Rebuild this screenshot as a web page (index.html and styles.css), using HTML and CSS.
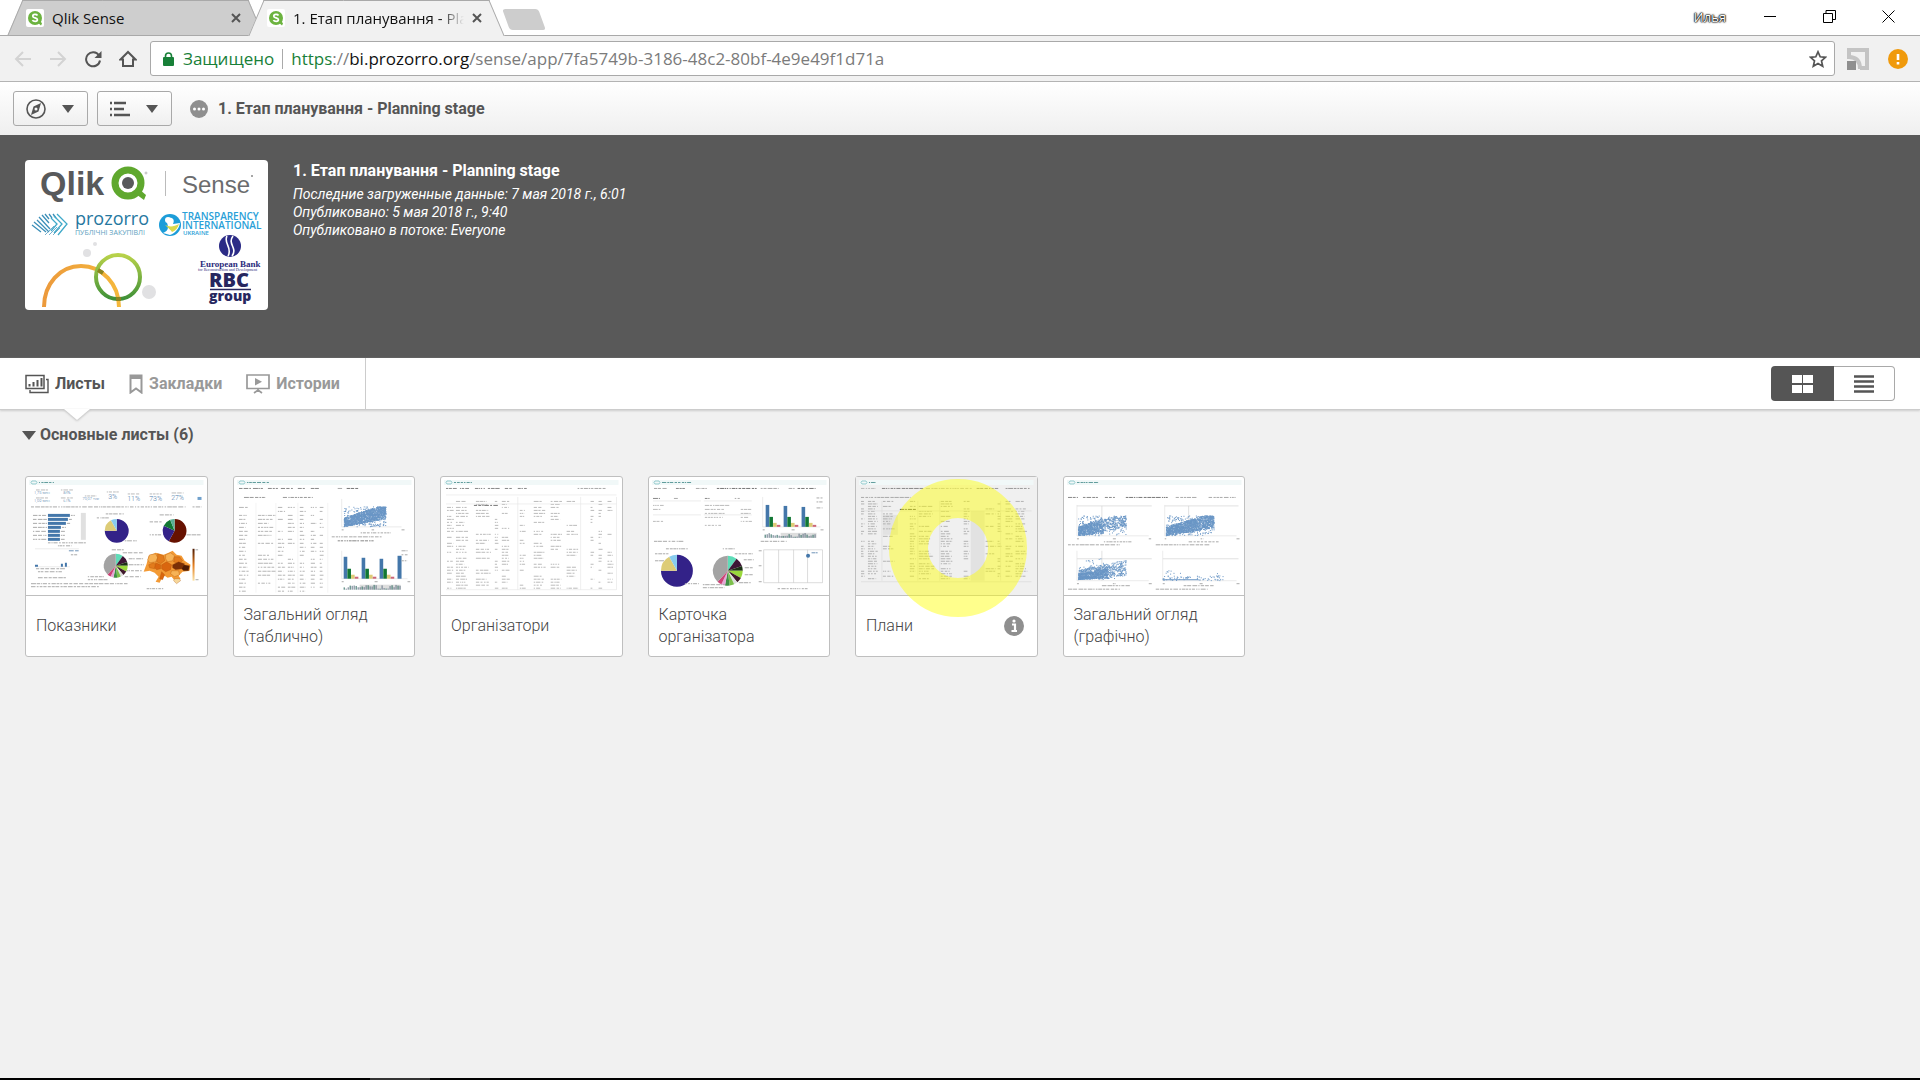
FILE: index.html
```html
<!DOCTYPE html>
<html lang="ru">
<head>
<meta charset="utf-8">
<meta name="viewport" content="width=device-width, initial-scale=1">
<title>1. Етап планування - Planning stage</title>
<link rel="stylesheet" href="styles.css">
</head>
<body>

<!-- browser tabs -->
<div class="tabstrip">
  <div class="tab">
    <svg class="favicon" viewBox="0 0 18 18"><rect width="18" height="18" rx="2" fill="#fff"/><circle cx="9" cy="9" r="7" fill="#6cb33f"/><path d="M11 13l4 3.500 1-2-2-3z" fill="#6cb33f"/><path d="M11.500 6.500C10.500 5 6.800 5 6.800 7.200c0 2 4.600 1.400 4.600 3.500 0 2.200-4 2-5 .4" fill="none" stroke="#fff" stroke-width="1.700"/></svg>
    <span class="tab-name">Qlik Sense</span>
    <button class="tab-close" aria-label="Закрыть"><svg viewBox="0 0 10 10"><path d="M1 1l8 8M9 1l-8 8"/></svg></button>
  </div>
  <div class="tab active">
    <svg class="favicon" viewBox="0 0 18 18"><rect width="18" height="18" rx="2" fill="#fff"/><circle cx="9" cy="9" r="7" fill="#6cb33f"/><path d="M11 13l4 3.500 1-2-2-3z" fill="#6cb33f"/><path d="M11.500 6.500C10.500 5 6.800 5 6.800 7.200c0 2 4.600 1.400 4.600 3.500 0 2.200-4 2-5 .4" fill="none" stroke="#fff" stroke-width="1.700"/></svg>
    <span class="tab-name">1. Етап планування - Planning</span>
    <button class="tab-close" aria-label="Закрыть"><svg viewBox="0 0 10 10"><path d="M1 1l8 8M9 1l-8 8"/></svg></button>
  </div>
  <button class="new-tab" aria-label="Новая вкладка"></button>
  <div class="window-controls">
    <span class="user">Илья</span>
    <button aria-label="Свернуть"><svg viewBox="0 0 13 13"><path d="M0 6.500h12"/></svg></button>
    <button aria-label="Развернуть"><svg viewBox="0 0 13 13"><path d="M.5 3.500h9v9h-9zM3 3.500v-3h9.500v9H10"/></svg></button>
    <button aria-label="Закрыть"><svg viewBox="0 0 13 13"><path d="M.5.5l12 12M12.500.5l-12 12"/></svg></button>
  </div>
</div>

<!-- address bar -->
<div class="addressbar">
  <button class="nav-btn off" aria-label="Назад"><svg viewBox="0 0 18 18"><path d="M17 9H2M9 2L2 9l7 7"/></svg></button>
  <button class="nav-btn off" aria-label="Вперед"><svg viewBox="0 0 18 18"><path d="M1 9h15M9 2l7 7-7 7"/></svg></button>
  <button class="nav-btn" aria-label="Обновить"><svg viewBox="0 0 18 18"><path d="M15 5.500A7 7 0 1 0 16 10.500"/><path d="M17.500 1v7h-7z" fill="#555" stroke="none"/></svg></button>
  <button class="nav-btn" aria-label="Домой"><svg viewBox="0 0 18 18"><path d="M1.500 9.500L9 2l7.500 7.500H14V16H4V9.500z"/></svg></button>
  <div class="omnibox">
    <svg class="lock" viewBox="0 0 11 14"><rect y="5" width="11" height="9" rx="1" fill="#188038"/><path d="M2.500 6V4a3 3 0 0 1 6 0v2" fill="none" stroke="#188038" stroke-width="1.600"/></svg>
    <span class="secure">Защищено</span>
    <span class="url"><span class="scheme">https</span>://<span class="host">bi.prozorro.org</span>/sense/app/7fa5749b-3186-48c2-80bf-4e9e49f1d71a</span>
    <button class="star" aria-label="Добавить закладку"><svg viewBox="0 0 18 18"><path d="M9 1.800l2.200 5 5.300.5-4 3.600 1.200 5.300L9 13.400l-4.700 2.800 1.200-5.300-4-3.600 5.300-.5z" fill="none" stroke="#555" stroke-width="1.700"/></svg></button>
  </div>
  <button class="ext" aria-label="Расширение"><svg viewBox="0 0 22 22"><path d="M2 11V2h18v18h-7" fill="none" stroke="#c4c4c4" stroke-width="4"/><path d="M2 9c7 0 11 4 11 12" fill="none" stroke="#c4c4c4" stroke-width="4"/><rect y="13" width="9" height="9" fill="#8f8f8f"/></svg></button>
  <button class="ext" aria-label="Меню"><svg viewBox="0 0 22 22"><circle cx="11" cy="11" r="10" fill="#f09a0c"/><path d="M11 6v6M11 14v2.500" stroke="#fff" stroke-width="2.600"/></svg></button>
</div>

<!-- Qlik toolbar -->
<div class="app-toolbar">
  <button class="menu-btn" aria-label="Навигация">
    <svg viewBox="0 0 22 22"><circle cx="11" cy="11" r="9" fill="none" stroke="#555" stroke-width="1.600"/><path fill-rule="evenodd" d="M16 5l-2.500 8.500L6 17l2.500-8.500zM11 9.500a1.500 1.500 0 1 0 0 3 1.500 1.500 0 0 0 0-3z" fill="#555"/></svg>
    <span class="caret"></span>
  </button>
  <button class="menu-btn" aria-label="Меню приложения">
    <svg viewBox="0 0 22 22"><path d="M1 5h2M1 11h2M1 17h2M5 5h12M5 11h10M5 17h16" stroke="#555" stroke-width="2.600"/></svg>
    <span class="caret"></span>
  </button>
  <svg class="dots" viewBox="0 0 18 18"><circle cx="9" cy="9" r="9" fill="#8f8f8f"/><g fill="#fff"><circle cx="4.500" cy="9" r="1.500"/><circle cx="9" cy="9" r="1.500"/><circle cx="13.500" cy="9" r="1.500"/></g></svg>
  <span class="app-name">1. Етап планування - Planning stage</span>
</div>

<!-- app info -->
<div class="app-header">
  <svg class="app-logo" viewBox="0 0 243 150">
    <defs>
      <linearGradient id="ring" x1="0" y1="0" x2="0" y2="1"><stop offset="0" stop-color="#b8d24a"/><stop offset="1" stop-color="#3f9138"/></linearGradient>
      <linearGradient id="arc" x1="0" y1="0" x2="1" y2="0"><stop offset="0" stop-color="#ec9a3c"/><stop offset="1" stop-color="#f5b83c"/></linearGradient>
    </defs>
    <text class="l-qlik" x="15" y="35">Qlik</text>
    <circle cx="103" cy="23" r="13" fill="none" stroke="#5fa82e" stroke-width="7"/>
    <path d="M108 32l11 8 2-5-7-6z" fill="#5fa82e"/>
    <circle cx="103" cy="23" r="6" fill="#58595b"/>
    <circle cx="121" cy="13" r="1" fill="none" stroke="#999" stroke-width=".6"/>
    <path d="M140.500 11v25" stroke="#bbb"/>
    <text class="l-sense" x="157" y="33">Sense</text>
    <circle cx="227" cy="16" r="1" fill="#888"/>
    <g fill="none" stroke="#3c8fb8">
      <path d="M7 65l9 7M9 62l12 10M12 60l12 12M14 57l11 12M17 55l7 8M20 54l4 5M24 54l3 4M28 54l3 4" stroke-width="1.300"/>
      <path d="M32 54l10 10-9 11M29 56l8 8-8 9M26 58l6 6-6 7" stroke="#3fa9c9" stroke-width="1.300"/>
      <path d="M20 75l9-9M24 75l8-8M28 75l7-7" stroke-width="1" opacity=".7"/>
    </g>
    <text class="l-proz" x="50" y="65">prozorro</text>
    <text class="l-pub" x="50" y="75">ПУБЛІЧНІ ЗАКУПІВЛІ</text>
    <circle cx="145" cy="65" r="11" fill="#1c9dd9"/>
    <path d="M143 58c5-1 7 2 5 6l7-1c-1 6-5 10-10 12l-7-2c6-2 6-7 3-12z" fill="#fff"/>
    <path d="M140 65c4 2 9 2 14-1-1 4-4 7-7 8-1-2-4-4-7-7z" fill="#d9d94c"/>
    <circle cx="143" cy="60" r="3" fill="#fff"/>
    <text class="l-ti" x="157" y="60">TRANSPARENCY</text>
    <text class="l-ti" x="157" y="69">INTERNATIONAL</text>
    <text class="l-ua" x="158" y="75">UKRAINE</text>
    <circle cx="205" cy="86" r="11" fill="#2b2b86"/>
    <path d="M202 76c-4 7 6 12 1 20M208 76c-6 8 5 12-1 20" fill="none" stroke="#fff" stroke-width="1.600"/>
    <text class="l-eb" x="175" y="107">European Bank</text>
    <text class="l-rec" x="173" y="111">for Reconstruction and Development</text>
    <text class="l-rbc" x="184" y="127">RBC</text>
    <path d="M185 129.500h41" stroke="#27275f" stroke-width="1.500"/>
    <text class="l-grp" x="184" y="141">group</text>
    <path d="M19 147c0-23 16-41 37-41s38 18 38 41" fill="none" stroke="url(#arc)" stroke-width="4"/>
    <circle cx="93" cy="117" r="22" fill="none" stroke="url(#ring)" stroke-width="4"/>
    <path d="M73 110l5 3M91 139h5" stroke="#8a8420" stroke-width="4"/>
    <g fill="#e1e1e3"><circle cx="62" cy="93" r="4"/><circle cx="70" cy="84" r="2"/><circle cx="124" cy="132" r="7"/></g>
  </svg>
  <div class="app-info">
    <h1>1. Етап планування - Planning stage</h1>
    <p>Последние загруженные данные: 7 мая 2018 г., 6:01</p>
    <p>Опубликовано: 5 мая 2018 г., 9:40</p>
    <p>Опубликовано в потоке: Everyone</p>
  </div>
</div>

<!-- sheets / bookmarks / stories -->
<div class="content-bar">
  <div class="content-tabs">
    <button class="content-tab selected">
      <svg viewBox="0 0 24 20" fill="none" stroke="#555"><path d="M1 1.500h18v13H1z" stroke-width="1.500"/><path d="M21 5.500h2v13H5V16" stroke-width="1.400"/><path d="M4.500 12.500V10M8.500 12.500V8M12.500 12.500V6M16.500 12.500V4" stroke-width="2"/></svg>
      Листы
    </button>
    <button class="content-tab">
      <svg class="narrow" viewBox="0 0 14 20"><path d="M1.500 1.500h11v17L7 14.500l-5.500 4z" fill="none" stroke="#999" stroke-width="2"/><path d="M1 1h12v4H1z" fill="#999"/></svg>
      Закладки
    </button>
    <button class="content-tab">
      <svg viewBox="0 0 24 20"><path d="M1 1h22v13.500H1zM12 14.500V18M8 19l4-3 4 3" fill="none" stroke="#999" stroke-width="1.700"/><path d="M9 4l7 3.800-7 3.800z" fill="#999"/></svg>
      Истории
    </button>
  </div>
  <div class="view-toggle">
    <button class="on" aria-label="Сетка"><svg viewBox="0 0 22 18"><path d="M0 0h10v8H0zM11 0h10v8H11zM0 10h10v8H0zM11 10h10v8H11z" fill="#fff"/></svg></button>
    <button aria-label="Список"><svg viewBox="0 0 22 18"><path d="M1 1.500h20M1 6.500h20M1 11.500h20M1 16.500h20" stroke="#555" stroke-width="2.400"/></svg></button>
  </div>
</div>

<main>
  <h2><span class="caret"></span>Основные листы (6)</h2>
  <div class="sheets">
    <a class="sheet" href="#"><svg class="thumb" id="thumb1" viewBox="0 0 181 118"></svg><span class="name">Показники</span></a>
    <a class="sheet" href="#"><svg class="thumb" id="thumb2" viewBox="0 0 181 118"></svg><span class="name">Загальний огляд (таблично)</span></a>
    <a class="sheet" href="#"><svg class="thumb" id="thumb3" viewBox="0 0 181 118"></svg><span class="name">Організатори</span></a>
    <a class="sheet" href="#"><svg class="thumb" id="thumb4" viewBox="0 0 181 118"></svg><span class="name">Карточка організатора</span></a>
    <a class="sheet hovered" href="#"><svg class="thumb" id="thumb5" viewBox="0 0 181 118"></svg><span class="name">Плани
      <svg class="info" viewBox="0 0 20 20"><circle cx="10" cy="10" r="10" fill="#8f8f8f"/><path d="M8 8.500h3V15M7.500 15h5.500" fill="none" stroke="#fff" stroke-width="2.200"/><circle cx="10" cy="5" r="1.600" fill="#fff"/></svg></span>
      <span class="pointer-ring"></span></a>
    <a class="sheet" href="#"><svg class="thumb" id="thumb6" viewBox="0 0 181 118"></svg><span class="name">Загальний огляд (графічно)</span></a>
  </div>
</main>

<footer class="taskbar"><span></span></footer>

<script src="script.js"></script>
</body>
</html>
```
FILE: styles.css
```css
* {
  box-sizing: border-box;
}

body {
  margin: 0;
  min-height: 100vh;
  display: flex;
  flex-direction: column;
  background: #f1f1f1;
  color: #555;
  font-family: Roboto, "Noto Sans", sans-serif;
  font-size: 16px;
}

button {
  display: flex;
  align-items: center;
  justify-content: center;
  margin: 0;
  padding: 0;
  border: none;
  background: none;
  color: inherit;
  font: inherit;
  cursor: pointer;
}

h1, h2, p {
  margin: 0;
}

svg {
  display: block;
  flex: none;
}

/* browser tabs */
.tabstrip {
  display: flex;
  height: 36px;
  padding-left: 15px;
  background: #fff;
  border-bottom: 1px solid #a9a9a9;
  font-family: "Open Sans", sans-serif;
  font-size: 15px;
  color: #111;
}

.tab {
  position: relative;
  z-index: 1;
  display: flex;
  align-items: center;
  width: 241px;
  height: 35px;
  padding: 0 15px 0 11px;
}

.tab::before, .tab::after {
  content: '';
  position: absolute;
  z-index: -1;
  top: 0;
  bottom: 0;
  width: 60%;
  background: #cecece;
  border-top: 1px solid #a9a9a9;
}

.tab::before {
  left: 0;
  border-left: 1px solid #a9a9a9;
  transform: skewX(-23deg);
}

.tab::after {
  right: 0;
  border-right: 1px solid #a9a9a9;
  transform: skewX(23deg);
}

.tab.active {
  z-index: 2;
  height: 36px;
}

.tab.active::before, .tab.active::after {
  background: #f1f1f1;
}

.favicon {
  width: 18px;
  height: 18px;
  margin-right: 8px;
}

.tab-name {
  flex: 1;
  overflow: hidden;
  white-space: nowrap;
}

.active .tab-name {
  -webkit-mask-image: linear-gradient(to right, #000 86%, transparent);
  mask-image: linear-gradient(to right, #000 86%, transparent);
}

.tab-close {
  margin-left: 8px;
}

.tab-close svg {
  width: 10px;
  height: 10px;
  stroke: #555;
  stroke-width: 2;
}

.new-tab {
  width: 36px;
  height: 21px;
  margin: 9px 0 0 9px;
  background: #cdcdcd;
  border-radius: 3px;
  transform: skewX(20deg);
}

.window-controls {
  display: flex;
  align-items: center;
  gap: 46px;
  height: 33px;
  margin-left: auto;
  padding-right: 25px;
}

.window-controls svg {
  width: 13px;
  height: 13px;
  fill: none;
  stroke: #000;
}

.user {
  margin-right: -8px;
  font-size: 13px;
  color: #fff;
  text-shadow: 0 0 1px #000, 0 0 1px #000, 0 0 2px #000, 0 0 2px #000;
}

/* address bar */
.addressbar {
  display: flex;
  align-items: center;
  height: 46px;
  padding: 0 10px 0 14px;
  background: #f1f1f1;
  border-bottom: 1px solid #b3b3b3;
}

.nav-btn {
  width: 18px;
  margin-right: 17px;
}

.nav-btn svg, .star svg {
  width: 18px;
  height: 18px;
}

.nav-btn svg {
  fill: none;
  stroke: #555;
  stroke-width: 2;
}

.nav-btn.off svg {
  stroke: #d3d3d3;
}

.omnibox {
  flex: 1;
  display: flex;
  align-items: center;
  height: 35px;
  margin-right: 12px;
  margin-left: -4px;
  padding: 0 7px 0 12px;
  background: #fff;
  border: 1px solid #a9a9a9;
  border-radius: 3px;
  font-family: "Open Sans", sans-serif;
  font-size: 17px;
}

.lock {
  width: 11px;
  height: 14px;
}

.secure {
  margin-left: 9px;
  padding-right: 8px;
  border-right: 1px solid #aaa;
  line-height: 20px;
  color: #188038;
}

.url {
  flex: 1;
  margin-left: 8px;
  color: #7b7b7b;
}

.scheme {
  color: #188038;
}

.host {
  color: #111;
}

.ext {
  margin-right: 1px;
}

.ext + .ext {
  margin-left: 17px;
}

.ext svg {
  width: 22px;
  height: 22px;
}

/* Qlik toolbar */
.app-toolbar {
  display: flex;
  align-items: center;
  height: 53px;
  padding-left: 13px;
  background: linear-gradient(#fff, #efefef);
}

.menu-btn {
  justify-content: space-between;
  width: 75px;
  height: 35px;
  margin-right: 9px;
  padding: 0 13px 0 11px;
  border: 1px solid #a9a9a9;
  border-radius: 3px;
  background: linear-gradient(#fff, #efefef);
}

.menu-btn svg {
  width: 22px;
  height: 22px;
}

.caret {
  display: inline-block;
  border: 6px solid transparent;
  border-top: 8px solid #555;
  border-bottom: none;
}

.dots {
  width: 18px;
  height: 18px;
  margin: 0 10px 0 9px;
}

.app-name {
  font-weight: bold;
}

/* app info */
.app-header {
  display: flex;
  align-items: flex-start;
  gap: 25px;
  min-height: 223px;
  padding: 25px;
  background: #595959;
  color: #fff;
}

.app-logo {
  width: 243px;
  height: 150px;
  background: #fff;
  border-radius: 4px;
}

.app-logo text {
  font-family: "Open Sans", sans-serif;
}

.app-logo .l-qlik {
  font: bold 34px "Liberation Sans", sans-serif;
  fill: #58595b;
}

.app-logo .l-sense {
  font: 24px "Liberation Sans", sans-serif;
  fill: #6b6c6e;
}

.l-proz {
  font-size: 18px;
  fill: #25789f;
}

.l-pub {
  font-size: 7px;
  fill: #5c9fc0;
}

.l-ti {
  font-size: 10px;
  font-weight: 600;
  fill: #2a9fd8;
}

.l-ua {
  font-size: 6px;
  font-weight: 600;
  fill: #2a9fd8;
}

.app-logo .l-eb {
  font: bold 9px "Liberation Serif", serif;
  fill: #2b2b7c;
}

.app-logo .l-rec {
  font: 4px "Liberation Serif", serif;
  fill: #2b2b7c;
}

.l-rbc, .l-grp {
  font-weight: 800;
  fill: #27275f;
}

.l-rbc {
  font-size: 20px;
}

.l-grp {
  font-size: 14px;
}

.app-info h1 {
  margin-bottom: 4px;
  font-size: 16px;
  line-height: 21px;
}

.app-info p {
  font-size: 14px;
  font-style: italic;
  line-height: 18px;
}

/* sheets / bookmarks / stories */
.content-bar {
  display: flex;
  justify-content: space-between;
  align-items: center;
  height: 52px;
  padding-right: 25px;
  background: #fff;
  border-bottom: 1px solid #ccc;
  box-shadow: 0 1px 2px #ccc;
}

.content-tabs {
  display: flex;
  gap: 24px;
  height: 100%;
  padding: 0 25px;
  border-right: 1px solid #ccc;
}

.content-tab {
  position: relative;
  gap: 6px;
  font-weight: bold;
  color: #999;
}

.content-tab svg {
  width: 24px;
  height: 20px;
}

.content-tab svg.narrow {
  width: 14px;
}

.content-tab.selected {
  color: #555;
}

.content-tab.selected::after {
  content: '';
  position: absolute;
  top: 100%;
  left: 39px;
  border: 13px solid transparent;
  border-top: 11px solid #fff;
  border-bottom: none;
  filter: drop-shadow(0 1px 1px #bbb);
}

.view-toggle {
  display: flex;
}

.view-toggle button {
  width: 61px;
  height: 35px;
  border: 1px solid #a9a9a9;
  border-left: none;
  border-radius: 0 4px 4px 0;
}

.view-toggle .on {
  width: 63px;
  border: none;
  border-radius: 4px 0 0 4px;
  background: #555;
}

.view-toggle svg {
  width: 22px;
  height: 18px;
}

main {
  flex: 1;
  padding: 13px 25px 25px;
}

h2 {
  display: flex;
  align-items: center;
  gap: 4px;
  margin: 0 0 29px -3px;
  font-size: 16px;
  line-height: 24px;
}

h2 .caret {
  border-width: 9px 7px 0;
}

.sheets {
  display: grid;
  grid-template-columns: repeat(6, 1fr);
  gap: 25px;
  max-width: 1220px;
}

.sheet {
  position: relative;
  background: #fff;
  border: 1px solid #bfbfbf;
  border-radius: 3px;
  color: #444;
  font-weight: 300;
  text-decoration: none;
}

.thumb {
  width: 100%;
  border-bottom: 1px solid #bfbfbf;
}

.hovered .thumb {
  background: #f0f0f0;
}

.name {
  display: flex;
  align-items: center;
  justify-content: space-between;
  min-height: 60px;
  padding: 1px 13px 0 10px;
  line-height: 22px;
}

.info {
  width: 20px;
  height: 20px;
}

/* mouse highlight */
.pointer-ring {
  position: absolute;
  left: 33px;
  top: 2px;
  width: 138px;
  height: 138px;
  border: 39px solid rgba(255, 255, 0, 0.45);
  border-radius: 50%;
}

.taskbar {
  display: flex;
  height: 2px;
  padding-left: 370px;
  background: #000;
}

.taskbar span {
  width: 60px;
  background: #333;
}
```
FILE: script.js
```js
// draws the little sheet previews

var seed = 7;
function rnd() {
  seed = (seed * 16807) % 2147483647;
  return seed / 2147483647;
}

function rect(x, y, w, h, color) {
  return '<rect x="' + x + '" y="' + y + '" width="' + w + '" height="' + h + '" fill="' + color + '"/>';
}

// a line of unreadable text
function words(x, y, w, color) {
  var d = '';
  var end = x + w;
  while (x < end) {
    var len = Math.min(1 + rnd() * 4, end - x);
    d += 'M' + x.toFixed(1) + ' ' + y + 'h' + len.toFixed(1);
    x += len + 0.5 + rnd();
  }
  return '<path d="' + d + '" stroke="' + (color || '#aaa') + '"/>';
}

function header(w) {
  return rect(3, 3, 175, 5, '#f1f8f8') +
    '<path d="M6 4l-1 1.500 1 1.500h4l1-1.500-1-1.500z" fill="none" stroke="#7fc0c4" stroke-width=".8"/>' +
    words(13, 5.5, w, '#5f9c9c');
}

function pie(cx, cy, r, parts) {
  var a = 0, s = '';
  for (var i = 0; i < parts.length; i++) {
    var b = a + parts[i][0] * Math.PI * 2;
    s += '<path d="M' + cx + ' ' + cy +
      'L' + (cx + r * Math.sin(a)).toFixed(2) + ' ' + (cy - r * Math.cos(a)).toFixed(2) +
      'A' + r + ' ' + r + ' 0 ' + (b - a > Math.PI ? 1 : 0) + ' 1 ' +
      (cx + r * Math.sin(b)).toFixed(2) + ' ' + (cy - r * Math.cos(b)).toFixed(2) +
      'z" fill="' + parts[i][1] + '"/>';
    a = b;
  }
  return s;
}

// cols: [x, width, skip chance], gap between rows
function table(cols, top, bottom, gap, color) {
  var s = '';
  for (var y = top; y < bottom; y += gap) {
    for (var i = 0; i < cols.length; i++) {
      if (rnd() > cols[i][2]) {
        s += words(cols[i][0], y, cols[i][1] * (0.6 + rnd() * 0.4), color);
      }
    }
  }
  return s;
}

function bars(x, y, step, count) {
  var h = [22, 10, 4, 2];
  var c = ['#4477aa', '#117733', '#ddcc77', '#cc6677'];
  var s = '';
  for (var i = 0; i < count; i++) {
    for (var j = 0; j < 4; j++) {
      s += rect(x + i * step + j * 3.7, y - h[j] + i * (j ? 0 : 1), 3.6, h[j] - i * (j ? 0 : 1), c[j]);
    }
  }
  return s;
}

function miniBars(x, y, w) {
  var s = rect(x + 16, y - 5, w - 16, 5, '#ddd');
  for (var i = 0; i < w; i += 2) {
    var h = 1 + rnd() * 4;
    s += rect(x + i, y - h, 1, h, i % 3 ? '#667788' : '#2f6b62');
  }
  return s;
}

// thick cloud that rises to the right, thinner above
function scatter(x, y, w, h, n, slope, base) {
  var d = '';
  for (var i = 0; i < n; i++) {
    var px = rnd();
    var py = (base || 0) * px + rnd() * (0.45 + px * slope);
    if (rnd() < 0.15) py = rnd();
    if (py > 1) py = 1 - rnd() * 0.4;
    d += 'M' + (x + px * w).toFixed(1) + ' ' + (y + h - py * h).toFixed(1) + 'h1';
  }
  return '<path d="' + d + '" stroke="#6a97c6"/>';
}

function axes(x, y, w, h) {
  return '<path d="M' + x + ' ' + y + 'v' + h + 'h' + w + '" fill="none" stroke="#ddd" stroke-width=".6"/>' +
    words(x, y + h + 3, 2) + words(x + w / 2, y + h + 3, 3) + words(x + w, y + h + 3, 3);
}

var threeParts = [[0.75, '#332288'], [0.17, '#ddcc77'], [0.08, '#88ccee']];
var manyParts = [[0.1, '#5fdcb8'], [0.1, '#3d1535'], [0.05, '#1c3016'], [0.08, '#9ad83c'], [0.06, '#401a2c'],
  [0.04, '#ddd'], [0.05, '#7cbf4b'], [0.05, '#3f8f46'], [0.04, '#e5a6d6'], [0.05, '#cc4477'], [0.38, '#a3a3a3']];

function draw(id, html) {
  document.getElementById(id).innerHTML = html;
}

function kpi(x, y, text, size) {
  return words(x - 6, y - size, 12, '#bbb') +
    '<text x="' + x + '" y="' + y + '" font-size="' + size + '" text-anchor="middle" fill="#4f7dab">' + text + '</text>';
}

// 1: indicators
var s = header(15);
s += kpi(16, 17, '1,75 млн', 4) + kpi(16, 25, '1,09 млн', 4) + kpi(41, 17, '84%', 4) + kpi(41, 25, '61%', 4) +
  kpi(65, 23, '70,07 тис', 4) + kpi(87, 22, '3%', 7) + kpi(108, 24, '11%', 7) + kpi(130, 24, '73%', 7) + kpi(152, 23, '27%', 7);
s += rect(172, 20, 4, 3, '#6fa0cc') + words(5, 30, 155) + words(167, 30, 9);
var barW = [22, 20, 18, 13, 12, 12, 12];
for (var i = 0; i < barW.length; i++) {
  s += rect(22, 37 + i * 4, barW[i], 3, '#4477aa') + words(7, 38.5 + i * 4, 14) + words(23 + barW[i], 38.5 + i * 4, 4);
}
s += rect(55, 36, 5, 27, '#e0e0e0') + words(22, 66, 38) + words(32, 69, 14);
s += '<path d="M9 72h44M9 90h35" stroke="#ddd" stroke-width=".6"/>' + rect(9, 88, 3, 2, '#4477aa') + rect(35, 87, 2, 3, '#4477aa') + rect(39, 86, 2, 4, '#4477aa') +
  words(43, 74, 10, '#6f94b8') + words(45, 78, 7) + words(10, 92, 30) + words(12, 95, 24) + words(12, 101, 28);
s += pie(91, 54, 12, threeParts) + words(80, 37, 18) + words(71, 41, 12) + words(99, 64, 12);
s += pie(149, 54, 12, [[0.58, '#661100'], [0.24, '#332288'], [0.12, '#117733'], [0.06, '#5aae94']]) + words(134, 38, 14) + words(124, 45, 12) + words(124, 58, 12) + words(161, 58, 14);
s += pie(90, 89, 12, manyParts) + words(86, 73, 12) + words(97, 76, 20) + words(103, 82, 15) + words(103, 88, 15) + words(101, 94, 15) + words(99, 100, 16) + words(62, 100, 16) + words(62, 103, 20);
// map
s += '<path d="M121 87l2-8 7-3 8 2 5-2 4-2 4 4 5 1 3 5 6 4-1 6-7 1-4 4 2 3-5 3-4-5-4 1-3-2-3 3-2 4-4-1 3-5-4-4-5-2-6 1z" fill="#f39a35"/>' +
  '<g stroke="#a34a08" stroke-width=".3">' +
  '<path d="M124 78l6-1 2 4-2 4-6 1-2-3z" fill="#f7b357"/><path d="M132 77l6 2 1 5-4 3-4-2 1-4z" fill="#e27b1c"/>' +
  '<path d="M123 88l5-2 3 3-2 3-5-1z" fill="#e27b1c"/><path d="M130 86l5 2 0 4-4 1-2-2z" fill="#d9660f"/>' +
  '<path d="M140 78l5-2 4 3-2 5-5 1-2-3z" fill="#f7b357"/><path d="M136 88l5-3 5 3-1 5-5 2-4-3z" fill="#d9660f"/>' +
  '<path d="M136 95l3 3-2 5-3-1z" fill="#d9660f"/><path d="M149 80l5 0 3 4-4 3-5-2z" fill="#e27b1c"/>' +
  '<path d="M147 88l6-3 6 2-2 5-7 1-3-2z" fill="#7a2f06"/><path d="M158 88l6 1-1 5-5 0-2-2z" fill="#4d1b04"/>' +
  '<path d="M146 94l7 0 1 4-5 2-4-3z" fill="#f7b357"/>' +
  '<path d="M149 102l5 0 1 2-4 3-3-3z" fill="#f7d79a"/></g>';
s += '<defs><linearGradient id="scale" x1="0" y1="0" x2="0" y2="1"><stop offset="0" stop-color="#4d1b04"/><stop offset=".5" stop-color="#e27b1c"/><stop offset="1" stop-color="#fbe3a8"/></linearGradient></defs>' +
  rect(167, 72, 2, 32, 'url(#scale)') + words(170, 73, 3) + words(170, 103, 3);
s += words(5, 107, 98) + words(5, 110, 68) + words(121, 112, 18);
draw('thumb1', s);

// 2: overview table
s = header(22) + words(5, 11.5, 12, '#888') + words(19, 11.5, 10, '#888') + words(34, 11.5, 10, '#888') + words(47, 11.5, 12, '#888') + words(64, 11.5, 7, '#888') + words(77, 11.5, 9, '#888');
s += words(104, 11.5, 5) + words(113, 11.5, 12, '#777') + words(10, 20.5, 22, '#999') + words(49, 20.5, 30, '#999');
s += table([[5, 10, 0.1], [24, 18, 0.2], [44, 8, 0.2], [54, 8, 0.2], [66, 6, 0.2], [77, 6, 0.2], [86, 4, 0.2]], 30.5, 115, 4, '#b5b5b5');
s += '<path d="M22 26v90M42 26v90M64 26v90M94 26v90" stroke="#eee" stroke-width=".6"/>';
s += axes(108, 22, 60, 28) + scatter(110, 30, 42, 20, 1500, 0.3, 0.4) + words(127, 56, 30) + words(98, 60, 50) + words(104, 64, 36, '#888');
s += axes(108, 74, 66, 28) + bars(110, 102, 18, 3) + rect(164, 79, 4, 23, '#4477aa') + miniBars(110, 113, 57) + words(168, 74, 6) + words(168, 78, 6) + words(168, 84, 6);
draw('thumb2', s);

// 3: organizers
s = header(18) + words(5, 11.5, 12, '#888') + words(19, 11.5, 10, '#888') + words(34, 11.5, 10, '#888') + words(47, 11.5, 12, '#888') + words(64, 11.5, 7, '#888') + words(77, 11.5, 9, '#888') + words(137, 11.5, 28);
s += table([[6, 7, 0.4], [15, 13, 0.2], [35, 16, 0.5], [54, 4, 0.5], [61, 8, 0.5], [79, 6, 0.5], [93, 12, 0.3], [110, 12, 0.5], [126, 12, 0.5], [150, 4, 0.5], [158, 4, 0.5], [167, 6, 0.5]], 24.5, 114, 3, '#bbb');
s += '<path d="M5 18h171M5 27h171M5 113h171M77 20v93M140 20v93M176 20v93" stroke="#e4e4e4" stroke-width=".6"/>' + words(33, 28.5, 24, '#777');
draw('thumb3', s);

// 4: organizer card
s = header(30) + words(5, 11.5, 14) + words(27, 11.5, 9, '#888') + words(47, 11.5, 12) + words(68, 11.5, 40, '#777') + words(112, 11.5, 18) + words(140, 11.5, 6) + words(149, 11.5, 18, '#777');
s += words(4, 21.5, 7, '#888') + words(25, 21.5, 5) + words(56, 21.5, 6, '#888') + words(86, 21.5, 5);
s += table([[4, 12, 0.2], [56, 26, 0.1], [92, 12, 0.3]], 28.5, 50, 4, '#bbb') + '<path d="M4 24h48M55 24h48M4 38h48M55 38h48" stroke="#ddd" stroke-width=".6"/>';
s += axes(114, 20, 58, 30) + bars(117, 50, 18, 3) + miniBars(116, 61, 52) + words(168, 21, 6) + words(168, 25, 6) + words(168, 31, 6);
s += words(5, 64.5, 30) + words(112, 64.5, 26);
s += pie(28, 94, 16, threeParts) + words(17, 72, 22) + words(6, 77, 14) + words(6, 84, 10) + words(36, 107, 14);
s += pie(79, 94, 15, manyParts) + words(74, 72, 12) + words(86, 77, 18) + words(95, 83, 10) + words(96, 91, 8) + words(96, 98, 8) + words(90, 106, 12) + words(54, 108, 22) + words(54, 111, 22);
s += '<path d="M115 73h59v33h-59zM130 73v33M145 73v33M159 73v33" fill="none" stroke="#c4c4c4" stroke-width=".6"/>' +
  '<circle cx="159.500" cy="79" r="2" fill="#4477aa"/>' + words(163, 76, 7, '#6f94b8') + words(129, 112, 30) + words(110, 74, 3) + words(110, 89, 3) + words(110, 105, 3);
draw('thumb4', s);

// 5: plans
s = header(7) + words(5, 11.5, 15, '#bbb') + words(26, 11.5, 42, '#888') + words(70, 11.5, 46, '#bbb') + words(121, 11.5, 22, '#999') + words(150, 11.5, 24, '#999') + words(5, 20.5, 50, '#aaa');
s += rect(27, 38, 15, 20, '#e2e2e2') + rect(115, 34, 14, 70, '#e2e2e2');
s += table([[5, 4, 0.4], [12, 10, 0.1], [27, 12, 0.5], [54, 6, 0.4], [63, 16, 0.3], [85, 12, 0.2], [108, 6, 0.4], [130, 12, 0.8], [142, 4, 0.5], [150, 8, 0.4], [160, 12, 0.2]], 24.5, 104, 2.5, '#b3b3b3');
s += words(44, 32.5, 16, '#555') + '<path d="M5 105h171M5 34h171M26 24v80M62 24v80M84 24v80M145 24v80" stroke="#d6d6d6" stroke-width=".6"/>';
draw('thumb5', s);

// 6: overview charts
s = header(22) + words(4, 20.5, 10, '#888') + words(19, 20.5, 15, '#888') + words(41, 20.5, 10, '#888') + words(62, 20.5, 42, '#777') + words(112, 20.5, 22) + words(145, 20.5, 28);
s += '<path d="M13 29h75M38 29v30M101 29h74M125 29v30M13 82h75M38 74v30M99 82h76" stroke="#ccc" stroke-width=".6"/>';
s += axes(13, 28, 72, 31) + scatter(14, 39, 25, 20, 450, 0.35, 0.1) + scatter(14, 39, 48, 20, 650, 0.3, 0.4) + words(40, 65, 28) + words(4, 68, 52);
s += axes(101, 28, 72, 31) + scatter(102, 39, 48, 20, 1600, 0.3, 0.4) + words(125, 65, 30) + words(92, 68, 54);
s += axes(13, 74, 72, 30) + scatter(14, 90, 30, 13, 550, 0.3, 0.1) + scatter(14, 82, 48, 21, 550, 0.3, 0.2) + words(38, 109, 28) + words(4, 112.5, 52);
s += axes(99, 74, 74, 30) + scatter(99, 96, 60, 8, 70, 0.2) + scatter(100, 84, 12, 18, 10, 0.2) + '<path d="M99 103h36" stroke="#6f9bc8"/>' + words(120, 109, 30) + words(92, 112.5, 52);
draw('thumb6', s);
```
